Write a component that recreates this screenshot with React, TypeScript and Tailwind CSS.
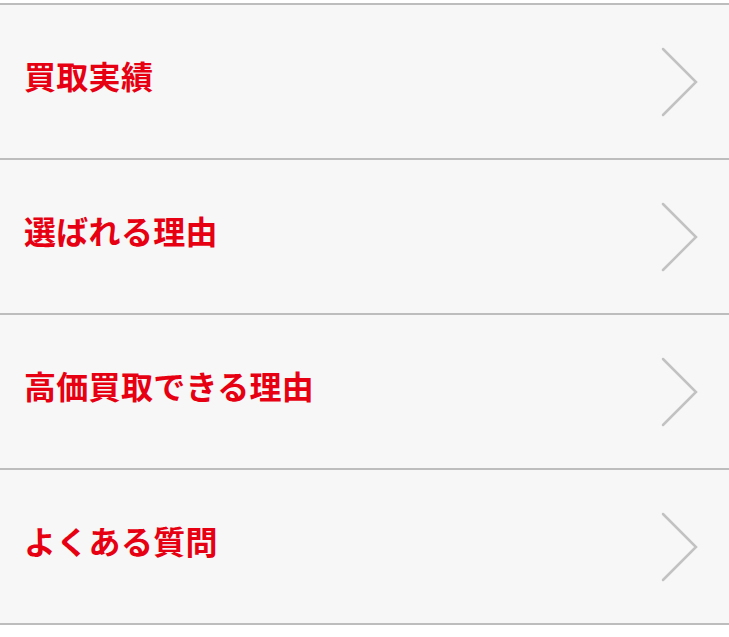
import React from 'react';

const items = ['買取実績', '選ばれる理由', '高価買取できる理由', 'よくある質問'];

function Chevron() {
    return (
        <svg width="38" height="70" viewBox="0 0 38 70" fill="none" className="shrink-0">
            <path d="M2 2 L35 35 L2 68" stroke="#c2c2c2" strokeWidth="2.5" strokeLinecap="round" strokeLinejoin="miter" />
        </svg>
    );
}

export default function App() {
    return (
        <div className="min-h-screen bg-white pt-[3px]" style={{ fontFamily: '"Noto Sans CJK JP", "Noto Sans", sans-serif' }}>
            <ul className="border-b-2 border-[#bdbdbd]">
                {items.map((label) => (
                    <li key={label} className="border-t-2 border-[#bdbdbd] bg-[#f7f7f7]">
                        <a href="#" className="flex h-[153px] items-center justify-between pl-6 pr-[30px]">
                            <span className="pb-[14px] text-[32px] font-bold leading-none tracking-[0.3px] text-[#e60012]">{label}</span>
                            <Chevron />
                        </a>
                    </li>
                ))}
            </ul>
        </div>
    );
}
